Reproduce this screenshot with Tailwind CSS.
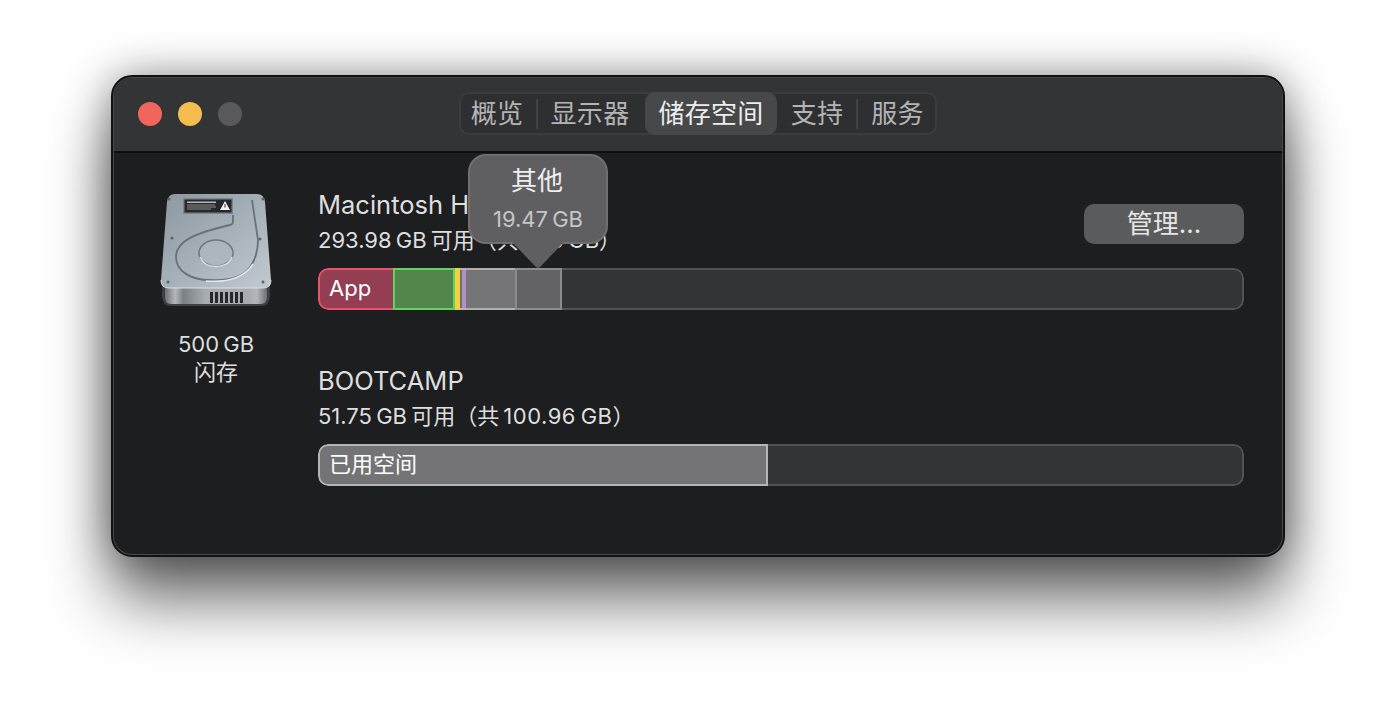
<!DOCTYPE html>
<html lang="zh-CN">
<head>
  <meta charset="UTF-8">
  <meta name="viewport" content="width=device-width, initial-scale=1.0">
  <title>储存空间</title>
  <script src="https://cdn.jsdelivr.net/npm/@tailwindcss/browser@4"></script>
</head>
<body class="bg-white h-[704px] overflow-hidden flex justify-center pt-[76px] font-['Inter','Noto_Sans_CJK_SC',sans-serif]">
  <div class="relative w-[1172px] h-[480px] rounded-[20px] bg-[#1d1e20] border-2 border-[#49494b] outline-2 outline-[#111] -outline-offset-1 shadow-[0_44px_64px_rgba(0,0,0,0.58),0_0_44px_rgba(0,0,0,0.42)] overflow-hidden text-[#dfdfdf]">
    <!-- title bar -->
    <div class="relative h-[75px] bg-[#333436] border-b-2 border-[#0e0e0f] flex items-center justify-center">
      <div class="absolute left-[24px] top-[24px] flex gap-[16px]">
        <span class="w-[24px] h-[24px] rounded-full bg-[#f0665c]"></span>
        <span class="w-[24px] h-[24px] rounded-full bg-[#f5bc4f]"></span>
        <span class="w-[24px] h-[24px] rounded-full bg-[#59595b]"></span>
      </div>
      <div class="flex items-center h-[43px] mt-[-2px] w-[478px] rounded-[10px] bg-[#2e2f31] border-2 border-[#3b3c3e] text-[26px] tracking-[0.3px] text-[#b4b4b4]">
        <span class="w-[77px] pr-[3px] text-center border-r-2 border-[#414244] leading-[30px]">概览</span>
        <span class="w-[107px] pr-[3px] text-center leading-[30px]">显示器</span>
        <span class="w-[132px] h-[43px] -my-[2px] flex items-center justify-center rounded-[10px] bg-[#47484a] text-[#eeeeee]">储存空间</span>
        <span class="w-[81px] pl-[1px] text-center border-r-2 border-[#414244] leading-[30px]">支持</span>
        <span class="w-[77px] pl-[2px] text-center leading-[30px]">服务</span>
      </div>
    </div>
    <!-- body -->
    <div class="flex pl-[46px] pr-[38px] pt-[40px]">
      <div class="w-[112px] shrink-0 flex flex-col items-center">
        <svg class="mt-[1px]" width="112" height="116" viewBox="0 0 112 116">
          <defs>
            <linearGradient id="plate" x1="0" y1="0" x2="1" y2="1">
              <stop offset="0" stop-color="#8c979f"/>
              <stop offset="0.55" stop-color="#a7b2ba"/>
              <stop offset="1" stop-color="#c2cacf"/>
            </linearGradient>
            <linearGradient id="side" x1="0" y1="0" x2="1" y2="0">
              <stop offset="0" stop-color="#6c7074"/>
              <stop offset="0.1" stop-color="#b4b8bb"/>
              <stop offset="0.18" stop-color="#7b8084"/>
              <stop offset="0.4" stop-color="#a9adb0"/>
              <stop offset="0.82" stop-color="#a9adb0"/>
              <stop offset="0.9" stop-color="#b4b8bb"/>
              <stop offset="1" stop-color="#6c7074"/>
            </linearGradient>
          </defs>
          <path d="M2 88h108v14q0 10-10 10H12Q2 112 2 102z" fill="#3e4144"/>
          <rect x="5" y="90" width="102" height="20" rx="6" fill="url(#side)"/>
          <path d="M15 0h82q7 0 8 8l6 78q0 8-8 8H9q-8 0-8-8L7 8q1-8 8-8z" fill="url(#plate)"/>
          <path d="M1 86q0 8 8 8h94q8 0 8-8" fill="none" stroke="#dce0e3" stroke-width="1"/>
          <rect x="23" y="4" width="50" height="16" fill="#7c858c"/>
          <rect x="24.500" y="5.500" width="47" height="13" fill="#26282b"/>
          <rect x="27" y="7.500" width="29" height="1.500" fill="#b5b7b9"/>
          <rect x="27" y="10.500" width="28" height="1" fill="#8a8c8e"/>
          <rect x="27" y="12.500" width="29" height="1" fill="#8a8c8e"/>
          <rect x="27" y="14.500" width="24" height="1" fill="#8a8c8e"/>
          <path d="M65 7l5 9h-10z" fill="#f2f2f2"/>
          <path d="M65 10v3.500" stroke="#26282b" stroke-width="1"/>
          <path d="M73 21v7q0 2-3 3C45 37 16 44 16 63C16 78 32 86 50 86C72 87 86 82 92 70Q98 60 98 46L92 6" fill="none" stroke="#687178" stroke-width="1.800"/>
          <path d="M46 87C70 89 86 82 93 70" fill="none" stroke="#e4e8ea" stroke-width="1.500"/>
          <ellipse cx="56" cy="59" rx="17" ry="13" fill="#abb6bd" stroke="#6d767c" stroke-width="1.500"/>
          <path d="M40 63c3 7 10 9.500 16 9.500 7 0 14-3 16-9.500" fill="none" stroke="#dbe0e3" stroke-width="1.500"/>
          <g fill="#5b6369">
            <circle cx="9" cy="5" r="1.500"/>
            <circle cx="103" cy="5" r="1.500"/>
            <circle cx="12" cy="44" r="1.500"/>
            <circle cx="100" cy="45" r="1.500"/>
            <circle cx="8" cy="88" r="1.500"/>
            <circle cx="103" cy="88" r="1.500"/>
          </g>
          <g fill="#26282a">
            <rect x="50" y="98" width="3" height="11"/>
            <rect x="55" y="98" width="3" height="11"/>
            <rect x="60" y="98" width="3" height="11"/>
            <rect x="65" y="98" width="3" height="11"/>
            <rect x="70" y="98" width="3" height="11"/>
            <rect x="75" y="98" width="3" height="11"/>
            <rect x="80" y="98" width="3" height="11"/>
          </g>
        </svg>
        <div class="mt-[20px] text-[22px] leading-[28px] text-center text-[#dedede] [word-spacing:-2px]">500 GB<br>闪存</div>
      </div>
      <div class="ml-[46px] flex-1">
        <div class="flex justify-between items-start h-[75px]">
          <div>
            <div class="text-[25.5px] leading-[30px] -mt-[3px]">Macintosh HD</div>
            <div class="text-[22px] leading-[28px] mt-[6px] [word-spacing:-2px]">293.98 GB 可用（共 500 GB）</div>
          </div>
          <button class="mt-[11px] w-[160px] h-[40px] rounded-[10px] bg-[#5a5b5d] text-[26px] leading-[36px] text-[#e6e6e6] text-center">管理...</button>
        </div>
        <div class="flex h-[42px] rounded-[10px] overflow-hidden text-[22px] text-white">
          <span class="w-[75px] pl-[9px] leading-[36px] bg-[#933e53] border-2 border-r-0 border-[#e9536f] rounded-l-[10px]">App</span>
          <span class="w-[62px] bg-[#52864c] border-2 border-[#62d35c]"></span>
          <span class="w-[5px] bg-[#f5d03e]"></span>
          <span class="w-[2px] bg-[#6f6f6f] border-y-2 border-[#b5b5b5]"></span>
          <span class="w-[4px] bg-[#b28fc5] border-y-2 border-[#b5b5b5]"></span>
          <span class="w-[49px] bg-[#757577] border-y-2 border-[#b0b0b0]"></span>
          <span class="w-[47px] bg-[#636365] border-2 border-[#8c8c8e]"></span>
          <span class="flex-1 bg-[#333436] border-2 border-l-0 border-[#525355] rounded-r-[10px]"></span>
        </div>
        <div class="text-[25.5px] leading-[30px] mt-[56px]">BOOTCAMP</div>
        <div class="text-[22px] leading-[28px] mt-[6px] [word-spacing:-2px]">51.75 GB 可用（共 <span class="tracking-[0.5px]">100.96 GB</span>）</div>
        <div class="mt-[14px] flex h-[42px] rounded-[10px] overflow-hidden">
          <span class="w-[450px] pl-[9px] leading-[36px] text-[22px] text-white bg-[#747476] border-2 border-[#b5b5b5] rounded-l-[10px]">已用空间</span>
          <span class="flex-1 bg-[#333436] border-2 border-l-0 border-[#525355] rounded-r-[10px]"></span>
        </div>
      </div>
    </div>
    <!-- tooltip over the bar -->
    <div class="absolute left-[354px] top-[76px] w-[140px] h-[90px] rounded-[18px] bg-[#5f5f61] border-2 border-[#6f6f71] text-center">
      <div class="text-[26px] leading-[32px] mt-[9px] pr-[2px] text-[#eeeeee]">其他</div>
      <div class="text-[22px] leading-[26px] mt-[9px] text-[#c6c6c6] [word-spacing:-2px]">19.47 GB</div>
    </div>
    <div class="absolute left-[398px] top-[164px] w-[52px] h-[26px] bg-[#5f5f61] [clip-path:polygon(0_0,100%_0,54%_96%,50%_100%,46%_96%)]"></div>
  </div>
</body>
</html>
